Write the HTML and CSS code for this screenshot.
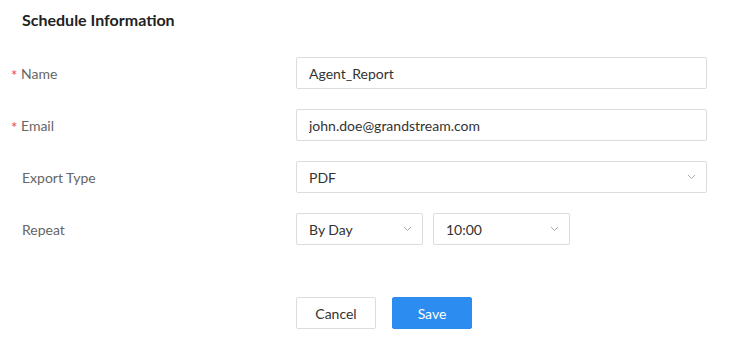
FILE: index.html
```html
<!DOCTYPE html>
<html lang="en">
<head>
    <meta charset="UTF-8">
    <meta name="viewport" content="width=device-width, initial-scale=1.0">
    <title>Schedule Information</title>
    <link rel="stylesheet" href="styles.css">
</head>
<body>
    <div class="panel">
        <h2 class="title">Schedule Information</h2>

        <div class="form">
            <div class="row">
                <label class="label"><span class="req">*</span>Name</label>
                <div class="control">
                    <input class="input" type="text" value="Agent_Report">
                </div>
            </div>
            <div class="row">
                <label class="label"><span class="req">*</span>Email</label>
                <div class="control">
                    <input class="input" type="text" value="john.doe@grandstream.com">
                </div>
            </div>
            <div class="row">
                <label class="label">Export Type</label>
                <div class="control">
                    <div class="select">
                        <span>PDF</span>
                        <svg class="arrow" width="9" height="6" viewBox="0 0 9 6"><path d="M1 1l3.5 3.5L8 1" fill="none" stroke="#aaa" stroke-width="1"/></svg>
                    </div>
                </div>
            </div>
            <div class="row">
                <label class="label">Repeat</label>
                <div class="control inline">
                    <div class="select small day">
                        <span>By Day</span>
                        <svg class="arrow" width="9" height="6" viewBox="0 0 9 6"><path d="M1 1l3.5 3.5L8 1" fill="none" stroke="#aaa" stroke-width="1"/></svg>
                    </div>
                    <div class="select small time">
                        <span>10:00</span>
                        <svg class="arrow" width="9" height="6" viewBox="0 0 9 6"><path d="M1 1l3.5 3.5L8 1" fill="none" stroke="#aaa" stroke-width="1"/></svg>
                    </div>
                </div>
            </div>
        </div>

        <div class="actions">
            <button class="btn">Cancel</button>
            <button class="btn primary">Save</button>
        </div>
    </div>
</body>
</html>
```

FILE: styles.css
```css
body {
    margin: 0;
    padding: 0;
    background: #fff;
    font-family: Lato, "Open Sans", sans-serif;
    color: #333;
}

.panel {
    width: 741px;
}

.title {
    margin: 0;
    padding-left: 22px;
    height: 40px;
    line-height: 40px;
    font-size: 16px;
    font-weight: bold;
    color: #222;
}

.form {
    margin-top: 17px;
    display: flex;
    flex-direction: column;
    gap: 20px;
}

.row {
    display: flex;
    align-items: center;
    height: 32px;
}

.label {
    width: 274px;
    padding-left: 22px;
    font-size: 14px;
    color: #666;
}

.req {
    display: inline-block;
    width: 10px;
    margin-left: -11px;
    color: #e5492b;
    font-size: 15px;
    line-height: 1;
    position: relative;
    top: 2px;
}

.control {
    width: 411px;
}

.control.inline {
    display: flex;
    gap: 10px;
}

.input,
.select {
    box-sizing: border-box;
    width: 100%;
    height: 32px;
    border: 1px solid #dcdcdc;
    border-radius: 2px;
    padding: 0 12px;
    font-family: inherit;
    font-size: 14px;
    color: #333;
    background: #fff;
    outline: none;
}

.select {
    display: flex;
    align-items: center;
    justify-content: space-between;
    padding-right: 10px;
}

.select.day {
    width: 127px;
}

.select.time {
    width: 137px;
}

.actions {
    margin-top: 52px;
    padding-left: 296px;
    display: flex;
    gap: 16px;
}

.btn {
    width: 80px;
    height: 32px;
    border: 1px solid #dcdcdc;
    border-radius: 2px;
    background: #fff;
    font-family: inherit;
    font-size: 14px;
    color: #333;
    cursor: pointer;
}

.btn.primary {
    background: #2d8cf0;
    border-color: #2d8cf0;
    color: #fff;
}
```
